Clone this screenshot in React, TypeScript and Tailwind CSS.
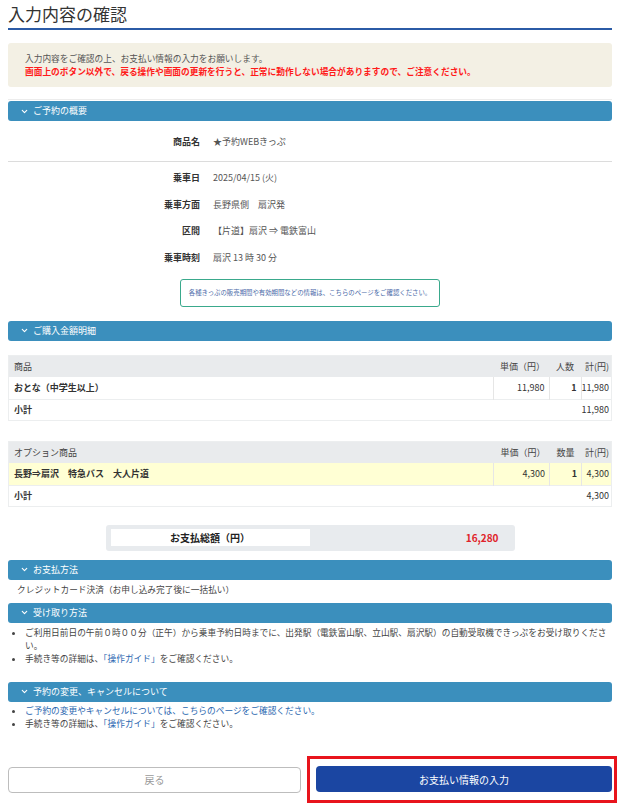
import { ChevronDown } from 'lucide-react';

const font = { fontFamily: '"Noto Sans CJK JP", "Noto Sans", sans-serif' };

function SectionBar({ title }: { title: string }) {
    return (
        <div className="flex h-[20px] items-center gap-[4px] rounded-[3px] bg-[#3b8fbd] pl-[12px] text-[9px] text-white">
            <ChevronDown size={9} strokeWidth={3} />
            <span>{title}</span>
        </div>
    );
}

type Row = { label: string; value: React.ReactNode };

const summaryRows: Row[] = [
    { label: '乗車日', value: '2025/04/15 (火)' },
    { label: '乗車方面', value: '長野県側\u3000扇沢発' },
    { label: '区間', value: '【片道】扇沢 ⇒ 電鉄富山' },
    { label: '乗車時刻', value: '扇沢 13 時 30 分' },
];

function SummaryRow({ label, value }: Row) {
    return (
        <div className="flex h-[26.6px] items-center text-[9px]">
            <div className="w-[192px] text-right font-bold text-[#333]">{label}</div>
            <div className="ml-[13px] text-[#555]">{value}</div>
        </div>
    );
}

function PriceTable({
    head,
    countLabel,
    name,
    price,
    count,
    total,
    highlight,
}: {
    head: string;
    countLabel: string;
    name: string;
    price: string;
    count: string;
    total: string;
    highlight?: boolean;
}) {
    return (
        <table className="w-full border-collapse border border-[#eceeef] text-[9px] text-[#333]">
            <tbody>
                <tr className="h-[22px] bg-[#e9ebed] text-[#444]">
                    <td className="pl-[5px]">{head}</td>
                    <td className="w-[56px] text-right pr-[4px]">単価（円）</td>
                    <td className="w-[32px] text-center">{countLabel}</td>
                    <td className="w-[30px] text-right pr-[2px]">計(円)</td>
                </tr>
                <tr className={`h-[22px] ${highlight ? 'bg-[#ffffd4]' : 'bg-white'}`}>
                    <td className="pl-[5px] font-bold">{name}</td>
                    <td className="border-x border-[#e6e6e6] text-right pr-[4px]">{price}</td>
                    <td className="border-r border-[#e6e6e6] text-right pr-[4px] font-bold">{count}</td>
                    <td className="text-right pr-[2px]">{total}</td>
                </tr>
                <tr className="h-[21px] border-t border-[#eceeef] bg-white">
                    <td className="pl-[5px] font-bold" colSpan={3}>小計</td>
                    <td className="text-right pr-[2px]">{total}</td>
                </tr>
            </tbody>
        </table>
    );
}

export default function App() {
    return (
        <div className="min-h-screen bg-white px-[8px] pb-[6px]" style={font}>
            {/* Title */}
            <div className="border-b-2 border-[#2b5ba6] pb-[2px] pt-[2px]">
                <h1 className="text-[17px] leading-[24px] text-[#333]">入力内容の確認</h1>
            </div>

            {/* Notice */}
            <div className="mt-[13px] rounded-[3px] bg-[#f3f0e4] px-[17px] pb-[9px] pt-[9px] text-[8.7px] leading-[13px]">
                <p className="text-[#555]">入力内容をご確認の上、お支払い情報の入力をお願いします。</p>
                <p className="font-bold text-[#ff1a1a]">
                    画面上のボタン以外で、戻る操作や画面の更新を行うと、正常に動作しない場合がありますので、ご注意ください。
                </p>
            </div>
            <div className="mt-[12px] border-t border-[#ececec]" />

            {/* Summary */}
            <div className="mt-[1px]">
                <SectionBar title="ご予約の概要" />
            </div>
            <div className="mt-[7px]">
                <SummaryRow label="商品名" value="★予約WEBきっぷ" />
            </div>
            <div className="mt-[6px] border-t border-[#dcdcdc]" />
            <div className="mt-[3px]">
                {summaryRows.map((r) => (
                    <SummaryRow key={r.label} label={r.label} value={r.value} />
                ))}
            </div>
            <div className="mt-[8px] flex justify-center">
                <div className="flex h-[28px] w-[260px] items-center justify-center rounded-[3px] border border-[#3aa98c] text-[6.4px] text-[#4a6aa8]">
                    各種きっぷの販売期間や有効期間などの情報は、こちらのページをご確認ください。
                </div>
            </div>

            {/* Purchase detail */}
            <div className="mt-[14px]">
                <SectionBar title="ご購入金額明細" />
            </div>
            <div className="mt-[14px]">
                <PriceTable
                    head="商品"
                    countLabel="人数"
                    name="おとな（中学生以上）"
                    price="11,980"
                    count="1"
                    total="11,980"
                />
            </div>
            <div className="mt-[20px]">
                <PriceTable
                    head="オプション商品"
                    countLabel="数量"
                    name={'長野⇒扇沢\u3000特急バス\u3000大人片道'}
                    price="4,300"
                    count="1"
                    total="4,300"
                    highlight
                />
            </div>

            {/* Total */}
            <div className="mt-[18px] flex justify-center">
                <div className="flex h-[26px] w-[409px] items-center rounded-[3px] bg-[#e8ebee] px-[5px]">
                    <div className="flex h-[17px] w-[199px] items-center justify-center bg-white text-[10px] font-bold text-[#222]">
                        お支払総額（円）
                    </div>
                    <div className="flex-1 pr-[11px] text-right text-[10px] font-bold text-[#e0242b]">16,280</div>
                </div>
            </div>

            {/* Payment */}
            <div className="mt-[9px]">
                <SectionBar title="お支払方法" />
            </div>
            <p className="mt-[3px] pl-[9px] text-[8.7px] leading-[14px] text-[#444]">
                クレジットカード決済（お申し込み完了後に一括払い）
            </p>

            {/* Receive */}
            <div className="mt-[6px]">
                <SectionBar title="受け取り方法" />
            </div>
            <ul className="mt-[3px] list-disc pl-[17px] text-[8.7px] leading-[13px] text-[#444]">
                <li>
                    ご利用日前日の午前０時００分（正午）から乗車予約日時までに、出発駅（電鉄富山駅、立山駅、扇沢駅）の自動受取機できっぷをお受け取りください。
                </li>
                <li>
                    手続き等の詳細は、<span className="text-[#2b67b0]">「操作ガイド」</span>をご確認ください。
                </li>
            </ul>

            {/* Change / cancel */}
            <div className="mt-[17px]">
                <SectionBar title="予約の変更、キャンセルについて" />
            </div>
            <ul className="mt-[2px] list-disc pl-[17px] text-[8.7px] leading-[13px] text-[#444]">
                <li>
                    <span className="text-[#2b67b0]">ご予約の変更やキャンセルについては、こちらのページをご確認ください。</span>
                </li>
                <li>
                    手続き等の詳細は、<span className="text-[#2b67b0]">「操作ガイド」</span>をご確認ください。
                </li>
            </ul>

            {/* Buttons */}
            <div className="mt-[26px] flex items-center">
                <button className="h-[26px] w-[293px] rounded-[4px] border border-[#bdbdbd] bg-white text-[10px] text-[#9a9a9a]">
                    戻る
                </button>
                <div className="ml-[6px] mr-[-5px] flex-1 border-[3px] border-[#e8141c] pb-[8px] pl-[6px] pr-[2px] pt-[6px]">
                    <button className="h-[26px] w-full rounded-[4px] bg-[#1b46a2] text-[10px] text-white">
                        お支払い情報の入力
                    </button>
                </div>
            </div>
        </div>
    );
}
